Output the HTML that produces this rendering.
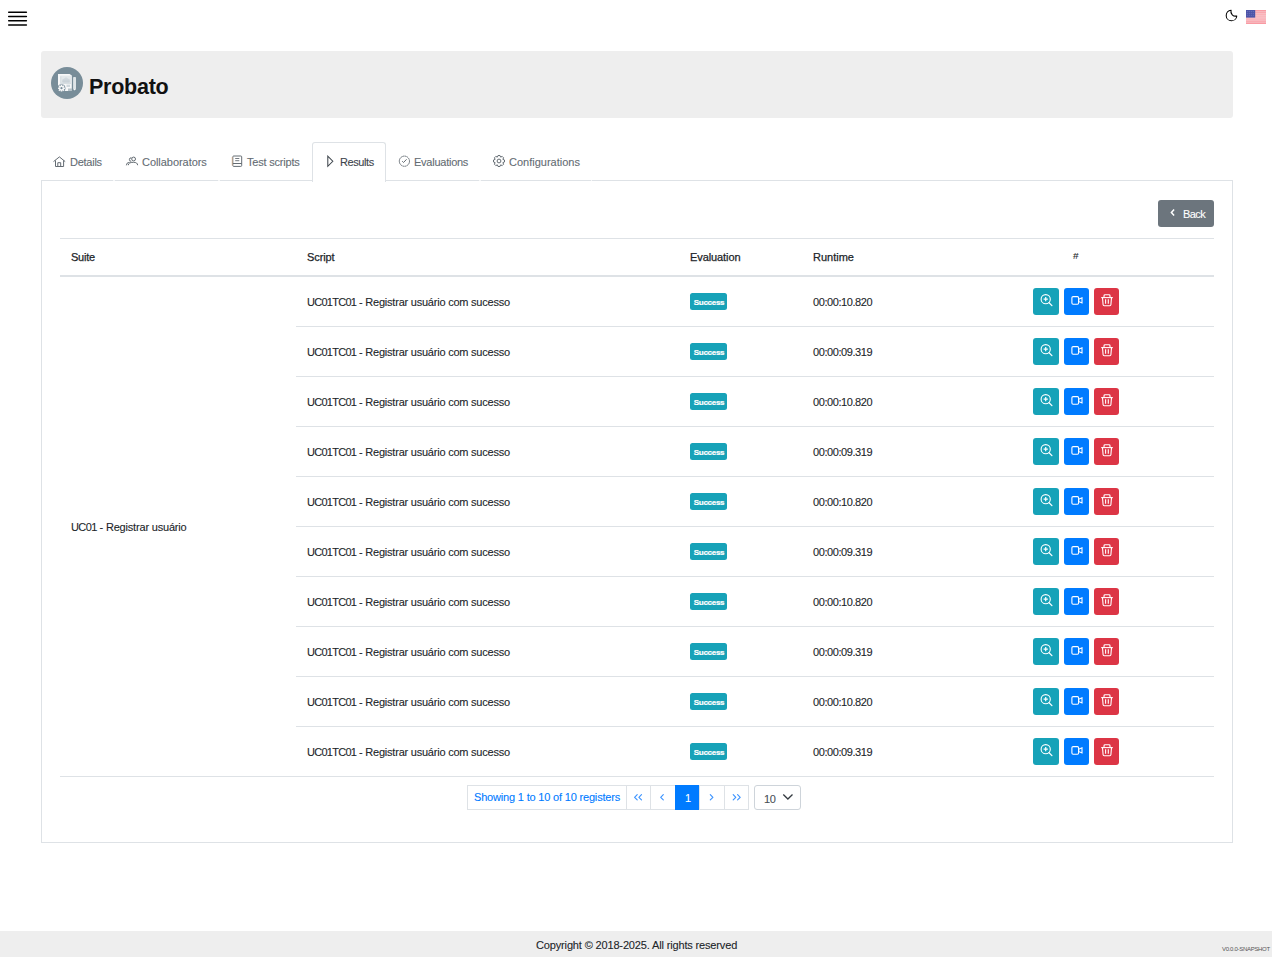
<!DOCTYPE html>
<html><head><meta charset="utf-8">
<style>
*{box-sizing:border-box;margin:0;padding:0}
html,body{width:1272px;height:957px;overflow:hidden;background:#fff;font-family:"Liberation Sans",sans-serif;color:#212529}
.abs{position:absolute}
.t{position:absolute;font-size:11px;line-height:11px;letter-spacing:-0.35px;white-space:nowrap;-webkit-text-stroke:0.1px currentColor}
.hamb{position:absolute;left:8px;width:19px;height:1.6px;background:#000;border-radius:1px}
.hdr{position:absolute;left:41px;top:51px;width:1192px;height:67px;background:#eee;border-radius:3px}
.title{position:absolute;left:89px;top:77px;font-weight:bold;font-size:21.5px;line-height:21px;color:#111;letter-spacing:-0.25px}
.tabs{position:absolute;left:41px;top:180px;width:1192px;height:1px;background:#dee2e6}
.tab{position:absolute;top:157px;font-size:11px;line-height:11px;color:#646c73;letter-spacing:-0.3px;white-space:nowrap;-webkit-text-stroke:0.1px currentColor}
.acttab{position:absolute;left:312px;top:142px;width:74px;height:40px;border:1px solid #dee2e6;border-bottom:none;background:#fff;border-radius:3px 3px 0 0}
.card{position:absolute;left:41px;top:180px;width:1192px;height:663px;border:1px solid #dee2e6;border-top:none}
.back{position:absolute;left:1158px;top:200px;width:56px;height:27px;background:#6c757d;border-radius:3px;color:#fff}
.hl{position:absolute;left:60px;width:1154px;background:#dee2e6}
.rb{position:absolute;left:296px;width:918px;height:1px;background:#dee2e6}
.badge{position:absolute;left:690px;width:37px;height:17px;background:#17a2b8;color:#fff;border-radius:2.5px;font-size:8px;font-weight:bold;line-height:19.5px;text-align:center;letter-spacing:-0.3px;-webkit-text-stroke:0.2px #fff;padding-left:1px}
.script{left:307px;letter-spacing:-0.225px}
.rt{left:813px;letter-spacing:-0.43px}
.btn{position:absolute;height:27px;border-radius:3px}
.btn svg{position:absolute;left:0;top:0}
.b1{left:1033px;width:26px;background:#17a2b8}
.b2{left:1064px;width:25px;background:#007bff}
.b3{left:1094px;width:25px;background:#dc3545}
.pg{position:absolute;top:785px;height:25px;border:1px solid #dee2e6;background:#fff;color:#007bff}
.footer{position:absolute;left:0;top:931px;width:1272px;height:26px;background:#eee}
</style></head><body>
<svg class="abs" style="left:0;top:0" width="40" height="40" viewBox="0 0 40 40"><g stroke="#000" stroke-width="1.5" stroke-linecap="round"><path d="M8.7 12.2 H26.4 M8.7 16.5 H26.4 M8.7 20.7 H26.4 M8.7 25 H26.4"/></g></svg>
<svg class="abs" style="left:1224px;top:8px" width="16" height="16" viewBox="0 0 16 16"><g transform="translate(7.5 7.5)"><path d="M-0.42 -5.28 A 5.3 5.3 0 1 0 5.28 0.42 A 4.6 4.6 0 0 1 -0.42 -5.28 Z" fill="none" stroke="#000" stroke-width="1.05" stroke-linejoin="round"/></g></svg>
<svg class="abs" style="left:1246px;top:10px" width="20" height="14" viewBox="0 0 20 14"><rect x="0" y="0.00" width="20" height="1.08" fill="#f99aa3"/><rect x="0" y="1.08" width="20" height="1.08" fill="#f7b3b9"/><rect x="0" y="2.15" width="20" height="1.08" fill="#f99aa3"/><rect x="0" y="3.23" width="20" height="1.08" fill="#f7b3b9"/><rect x="0" y="4.31" width="20" height="1.08" fill="#f99aa3"/><rect x="0" y="5.38" width="20" height="1.08" fill="#f7b3b9"/><rect x="0" y="6.46" width="20" height="1.08" fill="#f99aa3"/><rect x="0" y="7.54" width="20" height="1.08" fill="#f7b3b9"/><rect x="0" y="8.62" width="20" height="1.08" fill="#f99aa3"/><rect x="0" y="9.69" width="20" height="1.08" fill="#f7b3b9"/><rect x="0" y="10.77" width="20" height="1.08" fill="#f99aa3"/><rect x="0" y="11.85" width="20" height="1.08" fill="#f7b3b9"/><rect x="0" y="12.92" width="20" height="1.08" fill="#f99aa3"/><rect x="0" y="0" width="9.2" height="7.6" fill="#4d54a8"/><g fill="#6f74bb"><rect x="0.8" y="1.0" width="1" height="1"/><rect x="0.8" y="2.9" width="1" height="1"/><rect x="0.8" y="4.8" width="1" height="1"/><rect x="2.8" y="1.0" width="1" height="1"/><rect x="2.8" y="2.9" width="1" height="1"/><rect x="2.8" y="4.8" width="1" height="1"/><rect x="4.8" y="1.0" width="1" height="1"/><rect x="4.8" y="2.9" width="1" height="1"/><rect x="4.8" y="4.8" width="1" height="1"/><rect x="6.8" y="1.0" width="1" height="1"/><rect x="6.8" y="2.9" width="1" height="1"/><rect x="6.8" y="4.8" width="1" height="1"/></g></svg>

<div class="hdr"></div>
<svg class="abs" style="left:51px;top:67px" width="32" height="32" viewBox="0 0 32 32"><circle cx="16" cy="16" r="16" fill="#788d99"/>
<path d="M7 6.9 H18.6 L20.8 8.6 V24 H7 Z" fill="#f7f8f9"/>
<path d="M9.1 8.6 H20.3 V17 H9.1 Z" fill="#e3e8eb"/>
<path d="M9.8 9.4 V16.3 H19.6" fill="none" stroke="#c8d1d6" stroke-width="0.6"/>
<path d="M11.6 12.6 L15 10.3 L18.6 12.6 V16 H11.6 Z" fill="#d2dadf"/>
<path d="M11 13.2 H19.2 M11 14.6 H19.2" stroke="#bfc9cf" stroke-width="0.5"/>
<path d="M15.5 17.6 H19 V20 H15.5 Z" fill="#cfd7dc"/>
<g transform="translate(10.5 21.2)"><circle r="3.9" fill="#788d99"/><path d="M-0.8 -3.4 H0.8 V3.4 H-0.8 Z M-3.4 -0.8 V0.8 H3.4 V-0.8 Z" fill="#f7f8f9"/><path d="M-0.8 -3.4 H0.8 V3.4 H-0.8 Z M-3.4 -0.8 V0.8 H3.4 V-0.8 Z" fill="#f7f8f9" transform="rotate(45)"/><circle r="2.3" fill="#f7f8f9"/><circle r="1.1" fill="#788d99"/></g><path d="M17 21.5 H20.8 V24 H17 Z" fill="#788d99" opacity="0.5"/>
<rect x="22.1" y="10" width="2.9" height="12.2" rx="0.8" fill="#dfe5e8"/>
<path d="M22.1 22 L23.55 23.6 L25 22 Z" fill="#f7f8f9"/>
</svg>
<div class="title">Probato</div>

<div class="tabs"></div>
<div class="card"></div>
<div class="acttab"></div>
<div class="abs" style="left:113px;top:180px;width:2px;height:1px;background:#f6f7f8"></div><div class="abs" style="left:218px;top:180px;width:2px;height:1px;background:#f6f7f8"></div><div class="abs" style="left:479px;top:180px;width:2px;height:1px;background:#f6f7f8"></div><div class="abs" style="left:591px;top:180px;width:1px;height:1px;background:#f6f7f8"></div>
<svg class="abs" style="left:52px;top:156px" width="14" height="12" viewBox="0 0 14 12"><g fill="none" stroke="#646c73" stroke-width="1"><path d="M1.5 5.6 L7.4 0.9 L13.2 5.6"/><path d="M3.5 4.4 V10.5 H11.6 V4.4"/><path d="M5.8 10.5 V6.7 H8.7 V10.5"/></g></svg><svg class="abs" style="left:125px;top:155px" width="14" height="12" viewBox="0 0 14 12"><g fill="none" stroke="#646c73" stroke-width="1"><circle cx="8.6" cy="4" r="1.9"/><path d="M3.3 10.2 Q3.4 7.3 8.4 7.3 Q12.6 7.3 12.6 10.2"/><path d="M6.5 2.9 Q4.6 2.4 4.4 4.4 Q4.3 6.2 6.2 6.4"/><path d="M1.4 10.3 Q1.3 7.5 4.6 7.3"/></g></svg><svg class="abs" style="left:231px;top:154px" width="12" height="14" viewBox="0 0 12 14"><g fill="none" stroke="#646c73" stroke-width="1"><rect x="1.8" y="2" width="8.9" height="10.4" rx="0.9"/><path d="M4.2 4.5 H8.3 M4.2 6.7 H8.3" stroke-width="0.9"/><path d="M1.8 9.5 H10.7"/><path d="M1.2 3 V11.5" stroke="#e0b080" stroke-width="0.6"/></g></svg><svg class="abs" style="left:326px;top:155px" width="9" height="13" viewBox="0 0 9 13"><g fill="none" stroke="#3f464d" stroke-width="1.05"><path d="M1.8 1.2 V11.3 L6.8 6.25 Z" stroke-linejoin="miter"/></g></svg><svg class="abs" style="left:397px;top:154px" width="15" height="15" viewBox="0 0 15 15"><g fill="none" stroke="#646c73" stroke-width="1"><circle cx="7.4" cy="7.2" r="5.1" stroke-dasharray="1.6 0.4"/><path d="M5.2 7.2 L6.5 8.5 L9.6 5.3"/></g></svg><svg class="abs" style="left:491px;top:153px" width="16" height="16" viewBox="0 0 16 16"><g fill="none" stroke="#646c73" stroke-width="1"><path d="M6.39 4.12 L7.03 2.49 L8.97 2.49 L9.61 4.12 L11.21 3.41 L12.59 4.79 L11.88 6.39 L13.51 7.03 L13.51 8.97 L11.88 9.61 L12.59 11.21 L11.21 12.59 L9.61 11.88 L8.97 13.51 L7.03 13.51 L6.39 11.88 L4.79 12.59 L3.41 11.21 L4.12 9.61 L2.49 8.97 L2.49 7.03 L4.12 6.39 L3.41 4.79 L4.79 3.41 Z" stroke-linejoin="round"/><circle cx="8" cy="8" r="1.9"/></g></svg>
<span class="tab" style="left:70px;letter-spacing:-0.25px">Details</span>
<span class="tab" style="left:142px;letter-spacing:-0.05px">Collaborators</span>
<span class="tab" style="left:247px;letter-spacing:-0.2px">Test scripts</span>
<span class="tab" style="left:340px;color:#3d444b;letter-spacing:-0.4px">Results</span>
<span class="tab" style="left:414px;letter-spacing:-0.25px">Evaluations</span>
<span class="tab" style="left:509px;letter-spacing:0px">Configurations</span>

<div class="back"><svg class="abs" style="left:11px;top:7.5px" width="7" height="10" viewBox="0 0 7 10"><path d="M5.1 1.6 L2.4 4.6 L5.1 7.6" fill="none" stroke="#fff" stroke-width="1.5"/></svg><span class="t" style="left:25px;top:9px;color:#fff;letter-spacing:-0.6px">Back</span></div>

<div class="hl" style="top:238px;height:1px"></div>
<span class="t" style="left:71px;top:252px;letter-spacing:-0.25px;-webkit-text-stroke:0.25px #212529">Suite</span>
<span class="t" style="left:307px;top:252px;letter-spacing:-0.1px;-webkit-text-stroke:0.25px #212529">Script</span>
<span class="t" style="left:690px;top:252px;letter-spacing:-0.09px;-webkit-text-stroke:0.25px #212529">Evaluation</span>
<span class="t" style="left:813px;top:252px;letter-spacing:0px;-webkit-text-stroke:0.25px #212529">Runtime</span>
<span class="t" style="left:1073px;top:252px;font-size:10px;line-height:10px;transform:scaleY(0.9);transform-origin:0 0">#</span>
<div class="hl" style="top:275px;height:2px"></div>
<span class="t" style="left:71px;top:522px;letter-spacing:-0.19px"><span style="letter-spacing:-0.6px">UC01</span> - Registrar usuário</span>
<span class="script t" style="top:297px"><span style="letter-spacing:-0.72px">UC01TC01</span> - Registrar usuário com sucesso</span>
<span class="badge" style="top:293px">Success</span>
<span class="rt t" style="top:297px">00:00:10.820</span>
<span class="btn b1" style="top:288px"><svg class="ico" width="26" height="27" viewBox="0 0 26 27"><g fill="none" stroke="#fff" stroke-width="1.1"><circle cx="12.7" cy="11.2" r="4.6"/><path d="M16 14.6 L18.9 17.6" stroke-width="1.3" stroke-linecap="round"/><path d="M12.7 9.1 V13.3 M10.6 11.2 H14.8" stroke-width="1.2"/></g></svg></span>
<span class="btn b2" style="top:288px"><svg class="ico" width="25" height="27" viewBox="0 0 25 27"><g fill="none" stroke="#fff" stroke-width="1.1"><rect x="7.9" y="8.6" width="6.7" height="7.6" rx="1.2"/><path d="M14.6 11.3 L18 9.8 V15 L14.6 13.5 Z"/></g></svg></span>
<span class="btn b3" style="top:288px"><svg class="ico" width="25" height="27" viewBox="0 0 25 27"><g fill="none" stroke="#fff" stroke-width="1.1"><path d="M7.2 9.6 H18.8"/><path d="M10 9.6 V7.7 Q10 6.8 11 6.8 H15 Q16 6.8 16 7.7 V9.6"/><path d="M8.5 9.6 L9.1 16.8 Q9.2 17.7 10.2 17.7 H15.8 Q16.8 17.7 16.9 16.8 L17.5 9.6"/><path d="M11.6 11.3 V15.8 M14.3 11.3 V15.8"/></g></svg></span>
<div class="rb" style="top:326px;"></div>
<span class="script t" style="top:347px"><span style="letter-spacing:-0.72px">UC01TC01</span> - Registrar usuário com sucesso</span>
<span class="badge" style="top:343px">Success</span>
<span class="rt t" style="top:347px">00:00:09.319</span>
<span class="btn b1" style="top:338px"><svg class="ico" width="26" height="27" viewBox="0 0 26 27"><g fill="none" stroke="#fff" stroke-width="1.1"><circle cx="12.7" cy="11.2" r="4.6"/><path d="M16 14.6 L18.9 17.6" stroke-width="1.3" stroke-linecap="round"/><path d="M12.7 9.1 V13.3 M10.6 11.2 H14.8" stroke-width="1.2"/></g></svg></span>
<span class="btn b2" style="top:338px"><svg class="ico" width="25" height="27" viewBox="0 0 25 27"><g fill="none" stroke="#fff" stroke-width="1.1"><rect x="7.9" y="8.6" width="6.7" height="7.6" rx="1.2"/><path d="M14.6 11.3 L18 9.8 V15 L14.6 13.5 Z"/></g></svg></span>
<span class="btn b3" style="top:338px"><svg class="ico" width="25" height="27" viewBox="0 0 25 27"><g fill="none" stroke="#fff" stroke-width="1.1"><path d="M7.2 9.6 H18.8"/><path d="M10 9.6 V7.7 Q10 6.8 11 6.8 H15 Q16 6.8 16 7.7 V9.6"/><path d="M8.5 9.6 L9.1 16.8 Q9.2 17.7 10.2 17.7 H15.8 Q16.8 17.7 16.9 16.8 L17.5 9.6"/><path d="M11.6 11.3 V15.8 M14.3 11.3 V15.8"/></g></svg></span>
<div class="rb" style="top:376px;"></div>
<span class="script t" style="top:397px"><span style="letter-spacing:-0.72px">UC01TC01</span> - Registrar usuário com sucesso</span>
<span class="badge" style="top:393px">Success</span>
<span class="rt t" style="top:397px">00:00:10.820</span>
<span class="btn b1" style="top:388px"><svg class="ico" width="26" height="27" viewBox="0 0 26 27"><g fill="none" stroke="#fff" stroke-width="1.1"><circle cx="12.7" cy="11.2" r="4.6"/><path d="M16 14.6 L18.9 17.6" stroke-width="1.3" stroke-linecap="round"/><path d="M12.7 9.1 V13.3 M10.6 11.2 H14.8" stroke-width="1.2"/></g></svg></span>
<span class="btn b2" style="top:388px"><svg class="ico" width="25" height="27" viewBox="0 0 25 27"><g fill="none" stroke="#fff" stroke-width="1.1"><rect x="7.9" y="8.6" width="6.7" height="7.6" rx="1.2"/><path d="M14.6 11.3 L18 9.8 V15 L14.6 13.5 Z"/></g></svg></span>
<span class="btn b3" style="top:388px"><svg class="ico" width="25" height="27" viewBox="0 0 25 27"><g fill="none" stroke="#fff" stroke-width="1.1"><path d="M7.2 9.6 H18.8"/><path d="M10 9.6 V7.7 Q10 6.8 11 6.8 H15 Q16 6.8 16 7.7 V9.6"/><path d="M8.5 9.6 L9.1 16.8 Q9.2 17.7 10.2 17.7 H15.8 Q16.8 17.7 16.9 16.8 L17.5 9.6"/><path d="M11.6 11.3 V15.8 M14.3 11.3 V15.8"/></g></svg></span>
<div class="rb" style="top:426px;"></div>
<span class="script t" style="top:447px"><span style="letter-spacing:-0.72px">UC01TC01</span> - Registrar usuário com sucesso</span>
<span class="badge" style="top:443px">Success</span>
<span class="rt t" style="top:447px">00:00:09.319</span>
<span class="btn b1" style="top:438px"><svg class="ico" width="26" height="27" viewBox="0 0 26 27"><g fill="none" stroke="#fff" stroke-width="1.1"><circle cx="12.7" cy="11.2" r="4.6"/><path d="M16 14.6 L18.9 17.6" stroke-width="1.3" stroke-linecap="round"/><path d="M12.7 9.1 V13.3 M10.6 11.2 H14.8" stroke-width="1.2"/></g></svg></span>
<span class="btn b2" style="top:438px"><svg class="ico" width="25" height="27" viewBox="0 0 25 27"><g fill="none" stroke="#fff" stroke-width="1.1"><rect x="7.9" y="8.6" width="6.7" height="7.6" rx="1.2"/><path d="M14.6 11.3 L18 9.8 V15 L14.6 13.5 Z"/></g></svg></span>
<span class="btn b3" style="top:438px"><svg class="ico" width="25" height="27" viewBox="0 0 25 27"><g fill="none" stroke="#fff" stroke-width="1.1"><path d="M7.2 9.6 H18.8"/><path d="M10 9.6 V7.7 Q10 6.8 11 6.8 H15 Q16 6.8 16 7.7 V9.6"/><path d="M8.5 9.6 L9.1 16.8 Q9.2 17.7 10.2 17.7 H15.8 Q16.8 17.7 16.9 16.8 L17.5 9.6"/><path d="M11.6 11.3 V15.8 M14.3 11.3 V15.8"/></g></svg></span>
<div class="rb" style="top:476px;"></div>
<span class="script t" style="top:497px"><span style="letter-spacing:-0.72px">UC01TC01</span> - Registrar usuário com sucesso</span>
<span class="badge" style="top:493px">Success</span>
<span class="rt t" style="top:497px">00:00:10.820</span>
<span class="btn b1" style="top:488px"><svg class="ico" width="26" height="27" viewBox="0 0 26 27"><g fill="none" stroke="#fff" stroke-width="1.1"><circle cx="12.7" cy="11.2" r="4.6"/><path d="M16 14.6 L18.9 17.6" stroke-width="1.3" stroke-linecap="round"/><path d="M12.7 9.1 V13.3 M10.6 11.2 H14.8" stroke-width="1.2"/></g></svg></span>
<span class="btn b2" style="top:488px"><svg class="ico" width="25" height="27" viewBox="0 0 25 27"><g fill="none" stroke="#fff" stroke-width="1.1"><rect x="7.9" y="8.6" width="6.7" height="7.6" rx="1.2"/><path d="M14.6 11.3 L18 9.8 V15 L14.6 13.5 Z"/></g></svg></span>
<span class="btn b3" style="top:488px"><svg class="ico" width="25" height="27" viewBox="0 0 25 27"><g fill="none" stroke="#fff" stroke-width="1.1"><path d="M7.2 9.6 H18.8"/><path d="M10 9.6 V7.7 Q10 6.8 11 6.8 H15 Q16 6.8 16 7.7 V9.6"/><path d="M8.5 9.6 L9.1 16.8 Q9.2 17.7 10.2 17.7 H15.8 Q16.8 17.7 16.9 16.8 L17.5 9.6"/><path d="M11.6 11.3 V15.8 M14.3 11.3 V15.8"/></g></svg></span>
<div class="rb" style="top:526px;"></div>
<span class="script t" style="top:547px"><span style="letter-spacing:-0.72px">UC01TC01</span> - Registrar usuário com sucesso</span>
<span class="badge" style="top:543px">Success</span>
<span class="rt t" style="top:547px">00:00:09.319</span>
<span class="btn b1" style="top:538px"><svg class="ico" width="26" height="27" viewBox="0 0 26 27"><g fill="none" stroke="#fff" stroke-width="1.1"><circle cx="12.7" cy="11.2" r="4.6"/><path d="M16 14.6 L18.9 17.6" stroke-width="1.3" stroke-linecap="round"/><path d="M12.7 9.1 V13.3 M10.6 11.2 H14.8" stroke-width="1.2"/></g></svg></span>
<span class="btn b2" style="top:538px"><svg class="ico" width="25" height="27" viewBox="0 0 25 27"><g fill="none" stroke="#fff" stroke-width="1.1"><rect x="7.9" y="8.6" width="6.7" height="7.6" rx="1.2"/><path d="M14.6 11.3 L18 9.8 V15 L14.6 13.5 Z"/></g></svg></span>
<span class="btn b3" style="top:538px"><svg class="ico" width="25" height="27" viewBox="0 0 25 27"><g fill="none" stroke="#fff" stroke-width="1.1"><path d="M7.2 9.6 H18.8"/><path d="M10 9.6 V7.7 Q10 6.8 11 6.8 H15 Q16 6.8 16 7.7 V9.6"/><path d="M8.5 9.6 L9.1 16.8 Q9.2 17.7 10.2 17.7 H15.8 Q16.8 17.7 16.9 16.8 L17.5 9.6"/><path d="M11.6 11.3 V15.8 M14.3 11.3 V15.8"/></g></svg></span>
<div class="rb" style="top:576px;"></div>
<span class="script t" style="top:597px"><span style="letter-spacing:-0.72px">UC01TC01</span> - Registrar usuário com sucesso</span>
<span class="badge" style="top:593px">Success</span>
<span class="rt t" style="top:597px">00:00:10.820</span>
<span class="btn b1" style="top:588px"><svg class="ico" width="26" height="27" viewBox="0 0 26 27"><g fill="none" stroke="#fff" stroke-width="1.1"><circle cx="12.7" cy="11.2" r="4.6"/><path d="M16 14.6 L18.9 17.6" stroke-width="1.3" stroke-linecap="round"/><path d="M12.7 9.1 V13.3 M10.6 11.2 H14.8" stroke-width="1.2"/></g></svg></span>
<span class="btn b2" style="top:588px"><svg class="ico" width="25" height="27" viewBox="0 0 25 27"><g fill="none" stroke="#fff" stroke-width="1.1"><rect x="7.9" y="8.6" width="6.7" height="7.6" rx="1.2"/><path d="M14.6 11.3 L18 9.8 V15 L14.6 13.5 Z"/></g></svg></span>
<span class="btn b3" style="top:588px"><svg class="ico" width="25" height="27" viewBox="0 0 25 27"><g fill="none" stroke="#fff" stroke-width="1.1"><path d="M7.2 9.6 H18.8"/><path d="M10 9.6 V7.7 Q10 6.8 11 6.8 H15 Q16 6.8 16 7.7 V9.6"/><path d="M8.5 9.6 L9.1 16.8 Q9.2 17.7 10.2 17.7 H15.8 Q16.8 17.7 16.9 16.8 L17.5 9.6"/><path d="M11.6 11.3 V15.8 M14.3 11.3 V15.8"/></g></svg></span>
<div class="rb" style="top:626px;"></div>
<span class="script t" style="top:647px"><span style="letter-spacing:-0.72px">UC01TC01</span> - Registrar usuário com sucesso</span>
<span class="badge" style="top:643px">Success</span>
<span class="rt t" style="top:647px">00:00:09.319</span>
<span class="btn b1" style="top:638px"><svg class="ico" width="26" height="27" viewBox="0 0 26 27"><g fill="none" stroke="#fff" stroke-width="1.1"><circle cx="12.7" cy="11.2" r="4.6"/><path d="M16 14.6 L18.9 17.6" stroke-width="1.3" stroke-linecap="round"/><path d="M12.7 9.1 V13.3 M10.6 11.2 H14.8" stroke-width="1.2"/></g></svg></span>
<span class="btn b2" style="top:638px"><svg class="ico" width="25" height="27" viewBox="0 0 25 27"><g fill="none" stroke="#fff" stroke-width="1.1"><rect x="7.9" y="8.6" width="6.7" height="7.6" rx="1.2"/><path d="M14.6 11.3 L18 9.8 V15 L14.6 13.5 Z"/></g></svg></span>
<span class="btn b3" style="top:638px"><svg class="ico" width="25" height="27" viewBox="0 0 25 27"><g fill="none" stroke="#fff" stroke-width="1.1"><path d="M7.2 9.6 H18.8"/><path d="M10 9.6 V7.7 Q10 6.8 11 6.8 H15 Q16 6.8 16 7.7 V9.6"/><path d="M8.5 9.6 L9.1 16.8 Q9.2 17.7 10.2 17.7 H15.8 Q16.8 17.7 16.9 16.8 L17.5 9.6"/><path d="M11.6 11.3 V15.8 M14.3 11.3 V15.8"/></g></svg></span>
<div class="rb" style="top:676px;"></div>
<span class="script t" style="top:697px"><span style="letter-spacing:-0.72px">UC01TC01</span> - Registrar usuário com sucesso</span>
<span class="badge" style="top:693px">Success</span>
<span class="rt t" style="top:697px">00:00:10.820</span>
<span class="btn b1" style="top:688px"><svg class="ico" width="26" height="27" viewBox="0 0 26 27"><g fill="none" stroke="#fff" stroke-width="1.1"><circle cx="12.7" cy="11.2" r="4.6"/><path d="M16 14.6 L18.9 17.6" stroke-width="1.3" stroke-linecap="round"/><path d="M12.7 9.1 V13.3 M10.6 11.2 H14.8" stroke-width="1.2"/></g></svg></span>
<span class="btn b2" style="top:688px"><svg class="ico" width="25" height="27" viewBox="0 0 25 27"><g fill="none" stroke="#fff" stroke-width="1.1"><rect x="7.9" y="8.6" width="6.7" height="7.6" rx="1.2"/><path d="M14.6 11.3 L18 9.8 V15 L14.6 13.5 Z"/></g></svg></span>
<span class="btn b3" style="top:688px"><svg class="ico" width="25" height="27" viewBox="0 0 25 27"><g fill="none" stroke="#fff" stroke-width="1.1"><path d="M7.2 9.6 H18.8"/><path d="M10 9.6 V7.7 Q10 6.8 11 6.8 H15 Q16 6.8 16 7.7 V9.6"/><path d="M8.5 9.6 L9.1 16.8 Q9.2 17.7 10.2 17.7 H15.8 Q16.8 17.7 16.9 16.8 L17.5 9.6"/><path d="M11.6 11.3 V15.8 M14.3 11.3 V15.8"/></g></svg></span>
<div class="rb" style="top:726px;"></div>
<span class="script t" style="top:747px"><span style="letter-spacing:-0.72px">UC01TC01</span> - Registrar usuário com sucesso</span>
<span class="badge" style="top:743px">Success</span>
<span class="rt t" style="top:747px">00:00:09.319</span>
<span class="btn b1" style="top:738px"><svg class="ico" width="26" height="27" viewBox="0 0 26 27"><g fill="none" stroke="#fff" stroke-width="1.1"><circle cx="12.7" cy="11.2" r="4.6"/><path d="M16 14.6 L18.9 17.6" stroke-width="1.3" stroke-linecap="round"/><path d="M12.7 9.1 V13.3 M10.6 11.2 H14.8" stroke-width="1.2"/></g></svg></span>
<span class="btn b2" style="top:738px"><svg class="ico" width="25" height="27" viewBox="0 0 25 27"><g fill="none" stroke="#fff" stroke-width="1.1"><rect x="7.9" y="8.6" width="6.7" height="7.6" rx="1.2"/><path d="M14.6 11.3 L18 9.8 V15 L14.6 13.5 Z"/></g></svg></span>
<span class="btn b3" style="top:738px"><svg class="ico" width="25" height="27" viewBox="0 0 25 27"><g fill="none" stroke="#fff" stroke-width="1.1"><path d="M7.2 9.6 H18.8"/><path d="M10 9.6 V7.7 Q10 6.8 11 6.8 H15 Q16 6.8 16 7.7 V9.6"/><path d="M8.5 9.6 L9.1 16.8 Q9.2 17.7 10.2 17.7 H15.8 Q16.8 17.7 16.9 16.8 L17.5 9.6"/><path d="M11.6 11.3 V15.8 M14.3 11.3 V15.8"/></g></svg></span>
<div class="rb" style="top:776px;left:60px;width:1154px"></div>

<div class="pg" style="left:467px;width:160px"><span class="t" style="left:6px;top:6px;color:#007bff;letter-spacing:-0.18px">Showing 1 to 10 of 10 registers</span></div>
<div class="pg" style="left:626px;width:25px"><svg class="abs" style="left:-1px;top:-1px" width="25" height="25" viewBox="0 0 25 25"><path d="M11.2 9.7 L8.6 12.3 L11.2 14.9 M15.5 9.7 L12.9 12.3 L15.5 14.9" fill="none" stroke="#3d94ff" stroke-width="1.15" stroke-linecap="round" stroke-linejoin="round"/></svg></div>
<div class="pg" style="left:650px;width:26px"><svg class="abs" style="left:-1px;top:-1px" width="25" height="25" viewBox="0 0 25 25"><path d="M13.3 9.7 L10.7 12.3 L13.3 14.9" fill="none" stroke="#3d94ff" stroke-width="1.15" stroke-linecap="round" stroke-linejoin="round"/></svg></div>
<div class="pg" style="left:675px;width:25px;background:#007bff;border-color:#007bff"><span class="t" style="left:9px;top:7px;color:#fff">1</span></div>
<div class="pg" style="left:699px;width:26px"><svg class="abs" style="left:-1px;top:-1px" width="25" height="25" viewBox="0 0 25 25"><path d="M11.3 9.7 L13.9 12.3 L11.3 14.9" fill="none" stroke="#3d94ff" stroke-width="1.15" stroke-linecap="round" stroke-linejoin="round"/></svg></div>
<div class="pg" style="left:724px;width:25px"><svg class="abs" style="left:-1px;top:-1px" width="25" height="25" viewBox="0 0 25 25"><path d="M9.2 9.7 L11.8 12.3 L9.2 14.9 M13.6 9.7 L16.2 12.3 L13.6 14.9" fill="none" stroke="#3d94ff" stroke-width="1.15" stroke-linecap="round" stroke-linejoin="round"/></svg></div>
<div class="pg" style="left:754px;width:47px;border-color:#ced4da;border-radius:3px;color:#495057"><span class="t" style="left:9px;top:8px;color:#495057">10</span>
<svg class="abs" style="left:27px;top:7px" width="12" height="8" viewBox="0 0 12 8"><path d="M1.3 1.5 L5.9 6 L10.5 1.5" fill="none" stroke="#343a40" stroke-width="1.3"/></svg></div>

<div class="footer"></div>
<span class="t" style="left:536px;top:940px;letter-spacing:-0.15px">Copyright © 2018-2025. All rights reserved</span>
<span class="t" style="left:1222px;top:946px;font-size:6px;line-height:6px;letter-spacing:-0.3px;color:#555;-webkit-text-stroke:0">V0.0.0-SNAPSHOT</span>
</body></html>
